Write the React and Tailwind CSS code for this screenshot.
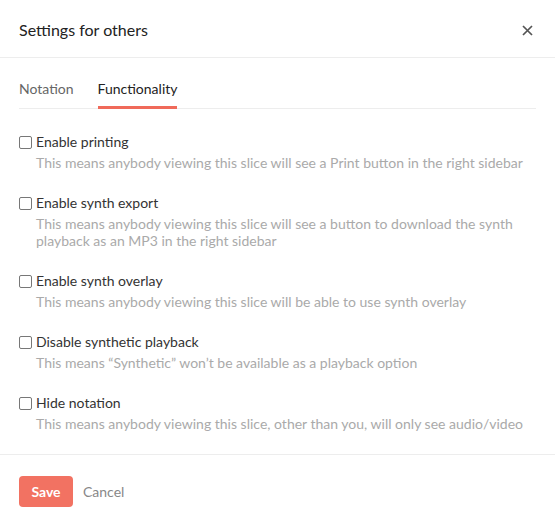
const options = [
  {
    label: "Enable printing",
    desc: "This means anybody viewing this slice will see a Print button in the right sidebar",
  },
  {
    label: "Enable synth export",
    desc: "This means anybody viewing this slice will see a button to download the synth playback as an MP3 in the right sidebar",
  },
  {
    label: "Enable synth overlay",
    desc: "This means anybody viewing this slice will be able to use synth overlay",
  },
  {
    label: "Disable synthetic playback",
    desc: "This means \u201cSynthetic\u201d won\u2019t be available as a playback option",
  },
  {
    label: "Hide notation",
    desc: "This means anybody viewing this slice, other than you, will only see audio/video",
  },
];

export default function App() {
  return (
    <div className="flex h-[529px] w-[555px] flex-col bg-white font-['Lato',sans-serif] text-[#222]">
      <header className="flex h-[58px] items-center justify-between border-b border-[#ededed] pl-[19px] pr-[22px] pt-[3px]">
        <h1 className="text-[16px] font-normal">Settings for others</h1>
        <button className="text-[#555]" aria-label="Close">
          <svg width="11" height="11" viewBox="0 0 11 11" fill="none" stroke="currentColor" strokeWidth="1.7">
            <path d="M1 1l9 9M10 1L1 10" />
          </svg>
        </button>
      </header>

      <div className="px-[19px]">
        <nav className="mt-[20px] flex gap-[24px] border-b border-[#ededed] text-[14px]">
          <span className="pb-[9px] text-[#666]">Notation</span>
          <span className="-mb-px border-b-[3px] border-[#f06a5a] pb-[7px] text-[#222]">Functionality</span>
        </nav>

        <ul className="mt-[23px] flex flex-col gap-[22px]">
          {options.map((o) => (
            <li key={o.label}>
              <label className="flex items-center gap-[4px] text-[14px] leading-[20px] text-[#333]">
                <span className="h-[13px] w-[13px] rounded-[2px] border border-[#777] bg-white" />
                {o.label}
              </label>
              <p className="mt-[2px] pl-[17px] pr-[10px] text-[14px] leading-[17px] text-[#aaa]">{o.desc}</p>
            </li>
          ))}
        </ul>
      </div>

      <footer className="mt-auto flex h-[75px] items-center gap-[10px] border-t border-[#ededed] px-[19px] pb-[2px]">
        <button className="h-[31px] w-[54px] rounded-[4px] bg-[#f27262] text-[14px] font-bold text-white">Save</button>
        <button className="text-[14px] text-[#888]">Cancel</button>
      </footer>
    </div>
  );
}
